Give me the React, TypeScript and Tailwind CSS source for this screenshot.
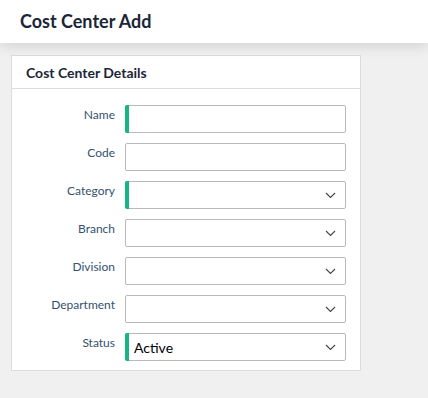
import React from "react";

const font = { fontFamily: "Lato, 'Open Sans', sans-serif" };

interface FieldProps {
  label: string;
  required?: boolean;
  select?: boolean;
  value?: string;
}

function Chevron() {
  return (
    <svg width="11" height="7" viewBox="0 0 11 7" className="text-[#444]">
      <path d="M1 1l4.5 4.5L10 1" fill="none" stroke="currentColor" strokeWidth="1.1" />
    </svg>
  );
}

function Field({ label, required, select, value }: FieldProps) {
  return (
    <div className="flex items-start">
      <label className="w-[113px] pr-[10px] pt-[2px] text-right text-[12px] leading-[16px] text-[#34516f]">{label}</label>
      <div className="relative flex h-[28px] w-[221px] items-center rounded-[2px] border border-[#b9b9b9] bg-white">
        {required && <div className="absolute -left-px -top-px -bottom-px w-[4px] rounded-l-[2px] bg-[#17b584]" />}
        <span className="flex-1 pl-[8px] text-[14px] text-black">{value}</span>
        {select && (
          <span className="pr-[9px]">
            <Chevron />
          </span>
        )}
      </div>
    </div>
  );
}

export default function App() {
  return (
    <div className="min-h-screen bg-[#f0f0f0]" style={font}>
      <div className="relative z-10 flex h-[43px] items-center bg-white pl-[20px] shadow-[0_3px_14px_rgba(0,0,0,0.13)]">
        <h1 className="text-[18px] font-bold text-[#1a2638]">Cost Center Add</h1>
      </div>
      <div className="ml-[11px] mt-[12px] w-[350px] border border-[#dcdcdc] bg-white">
        <div className="flex h-[33px] items-center border-b border-[#dcdcdc] pl-[14px]">
          <h2 className="text-[14px] font-bold text-[#1a2638]">Cost Center Details</h2>
        </div>
        <div className="flex flex-col gap-[10px] pb-[9px] pt-[16px]">
          <Field label="Name" required />
          <Field label="Code" />
          <Field label="Category" required select />
          <Field label="Branch" select />
          <Field label="Division" select />
          <Field label="Department" select />
          <Field label="Status" required select value="Active" />
        </div>
      </div>
    </div>
  );
}
